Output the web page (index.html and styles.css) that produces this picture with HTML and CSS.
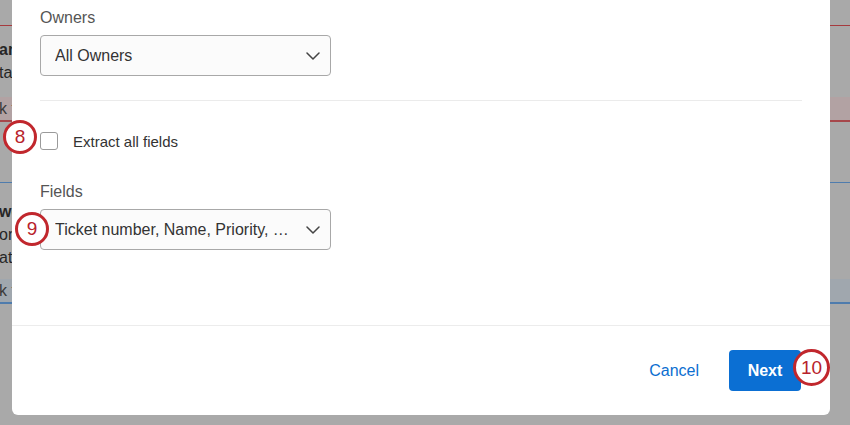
FILE: index.html
```html
<!DOCTYPE html>
<html lang="en">
<head>
    <meta charset="UTF-8">
    <meta name="viewport" content="width=device-width, initial-scale=1.0">
    <title>Extract Tickets</title>
    <link rel="stylesheet" href="styles.css">
</head>
<body>
    <!-- page behind the dialog, dimmed -->
    <div class="page">
        <div class="page-top"></div>
        <div class="page-item">
            <div class="item-title">an</div>
            <div class="item-line">ta</div>
        </div>
        <div class="page-band band-red">k t</div>
        <div class="page-gap"></div>
        <div class="page-item second">
            <div class="item-title">wo</div>
            <div class="item-line">on</div>
            <div class="item-line">at</div>
        </div>
        <div class="page-band band-blue">k t</div>
    </div>

    <div class="modal">
        <div class="modal-body">
            <label class="field-label" for="owners">Owners</label>
            <div class="select" id="owners">
                <span class="select-text">All Owners</span>
                <svg class="chevron" width="14" height="8" viewBox="0 0 14 8"><path d="M1 1l6 6 6-6" fill="none" stroke="#444" stroke-width="1.5" stroke-linecap="round" stroke-linejoin="round"/></svg>
            </div>

            <div class="divider"></div>

            <div class="check-row">
                <span class="checkbox"></span>
                <span class="check-label">Extract all fields</span>
            </div>

            <label class="field-label fields-label" for="fields">Fields</label>
            <div class="select" id="fields">
                <span class="select-text">Ticket number, Name, Priority, Status, Owner</span>
                <svg class="chevron" width="14" height="8" viewBox="0 0 14 8"><path d="M1 1l6 6 6-6" fill="none" stroke="#444" stroke-width="1.5" stroke-linecap="round" stroke-linejoin="round"/></svg>
            </div>
        </div>

        <div class="modal-footer">
            <button type="button" class="btn-cancel">Cancel</button>
            <button type="button" class="btn-next">Next</button>
        </div>
    </div>

    <span class="badge badge-8">8</span>
    <span class="badge badge-9">9</span>
    <span class="badge badge-10">10</span>
</body>
</html>
```

FILE: styles.css
```css
body {
    margin: 0;
    padding: 0;
    font-family: "Liberation Sans", Arial, sans-serif;
    background-color: #a9a9a9;
    width: 850px;
    height: 425px;
    overflow: hidden;
    position: relative;
}

.page {
    display: flex;
    flex-direction: column;
}

.page-top {
    height: 25px;
    border-bottom: 1px solid #a63a3e;
}

.page-item {
    height: 71px;
    padding-top: 13px;
    box-sizing: border-box;
    margin-left: -1px;
    color: #262626;
    font-size: 16px;
}

.page-item.second {
    height: 96px;
    padding-top: 18px;
}

.item-title {
    font-weight: bold;
    line-height: 22px;
}

.item-line {
    line-height: 23px;
}

.page-band {
    height: 23px;
    line-height: 23px;
    margin-left: -1px;
    font-size: 16px;
    color: #3a3a3a;
}

.band-red {
    background-color: #b2a2a3;
    border-bottom: 2px solid #a6474b;
}

.band-blue {
    background-color: #a0a7ae;
    border-bottom: 2px solid #4f7cad;
}

.page-gap {
    height: 60px;
    border-bottom: 1px solid #4f7cad;
}

.modal {
    position: absolute;
    left: 12px;
    top: -10px;
    width: 818px;
    height: 425px;
    background-color: #fff;
    border-radius: 6px;
    display: flex;
    flex-direction: column;
}

.modal-body {
    flex: 1;
    padding: 19px 28px 0 28px;
}

.field-label {
    display: block;
    font-size: 16px;
    line-height: 18px;
    color: #555;
}

.select {
    margin-top: 8px;
    width: 291px;
    height: 41px;
    box-sizing: border-box;
    border: 1px solid #a8a8a8;
    border-radius: 4px;
    background-color: #fbfbfb;
    display: flex;
    align-items: center;
    padding: 0 10px 0 14px;
}

.select-text {
    flex: 1;
    font-size: 16px;
    color: #333;
    white-space: nowrap;
    overflow: hidden;
    text-overflow: ellipsis;
    margin-right: 12px;
}

.chevron {
    flex-shrink: 0;
}

.divider {
    margin-top: 24px;
    height: 1px;
    background-color: #ebebeb;
}

.check-row {
    margin-top: 31px;
    display: flex;
    align-items: center;
}

.checkbox {
    width: 18px;
    height: 18px;
    box-sizing: border-box;
    border: 1px solid #9a9a9a;
    border-radius: 3px;
    background-color: #fff;
}

.check-label {
    margin-left: 15px;
    font-size: 15px;
    color: #333;
}

.fields-label {
    margin-top: 33px;
}

.modal-footer {
    height: 89px;
    border-top: 1px solid #ececec;
    display: flex;
    justify-content: flex-end;
    align-items: center;
    padding-right: 29px;
}

.btn-cancel {
    border: none;
    background: none;
    font-family: inherit;
    font-size: 16px;
    color: #0b6ed0;
    padding: 0;
    margin-right: 30px;
    cursor: pointer;
}

.btn-next {
    width: 72px;
    height: 41px;
    border: none;
    border-radius: 4px;
    background-color: #0b6fd3;
    color: #fff;
    font-family: inherit;
    font-size: 16px;
    font-weight: bold;
    cursor: pointer;
}

.badge {
    position: absolute;
    width: 34px;
    height: 34px;
    box-sizing: border-box;
    border: 3px solid #c1272d;
    border-radius: 50%;
    background-color: #fff;
    color: #b8222b;
    font-size: 19px;
    display: flex;
    align-items: center;
    justify-content: center;
}

.badge-8 {
    left: 3px;
    top: 120px;
}

.badge-9 {
    left: 15px;
    top: 212px;
}

.badge-10 {
    left: 793px;
    top: 349px;
    width: 37px;
    height: 37px;
}
```
